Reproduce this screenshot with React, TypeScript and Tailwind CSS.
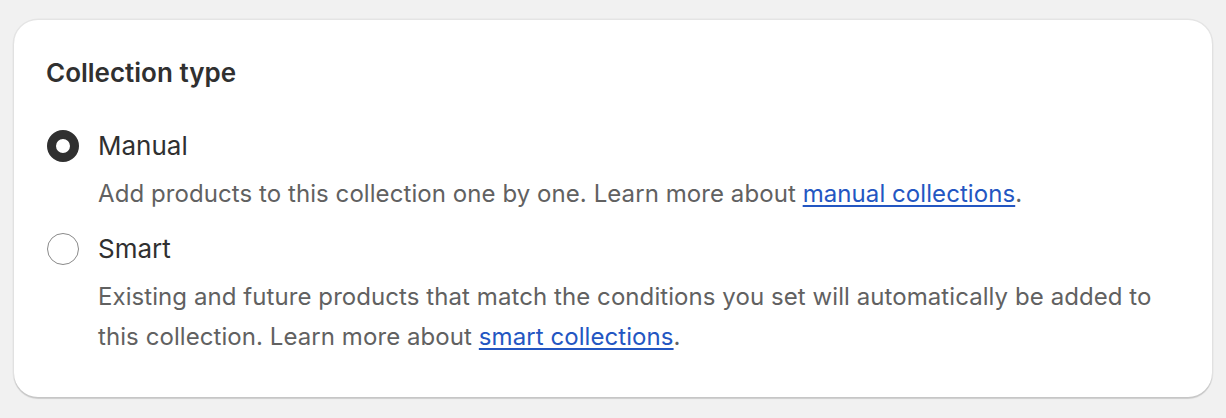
export default function App() {
  return (
    <div className="min-h-[418px] bg-[#f1f1f1] px-[14px] pt-[20px] pb-[20px] font-['Inter','Liberation_Sans',sans-serif]">
      <section className="rounded-[24px] bg-white px-[32px] pt-[33px] pb-[40px] shadow-[0_2px_1px_rgba(0,0,0,0.13),0_0_0_1.5px_rgba(0,0,0,0.05)]">
        <h2 className="text-[26px] leading-[40px] font-semibold text-[#303030]">Collection type</h2>

        <div className="mt-[33px] flex flex-col gap-[15px]">
          <div className="flex flex-col">
            <label className="flex items-center gap-[19px]">
              <span className="ml-px block w-[32px] h-[32px] rounded-full border-[9px] border-[#303030] bg-white"></span>
              <span className="text-[26px] leading-[40px] text-[#303030]">Manual</span>
            </label>
            <p className="mt-[8px] pl-[52px] text-[24px] leading-[40px] tracking-[0.003em] text-[#616161]">
              Add products to this collection one by one. Learn more about{" "}
              <a href="#" className="text-[#2356c2] underline underline-offset-[3px] decoration-[2px]">
                manual collections
              </a>
              .
            </p>
          </div>

          <div className="flex flex-col">
            <label className="flex items-center gap-[19px]">
              <span className="ml-px block w-[32px] h-[32px] rounded-full border-[1.5px] border-[#8a8a8a] bg-white"></span>
              <span className="text-[26px] leading-[40px] text-[#303030]">Smart</span>
            </label>
            <p className="mt-[8px] pl-[52px] text-[24px] leading-[40px] tracking-[0.003em] text-[#616161]">
              Existing and future products that match the conditions you set will automatically be added to this collection. Learn more about{" "}
              <a href="#" className="text-[#2356c2] underline underline-offset-[3px] decoration-[2px]">
                smart collections
              </a>
              .
            </p>
          </div>
        </div>
      </section>
    </div>
  );
}
